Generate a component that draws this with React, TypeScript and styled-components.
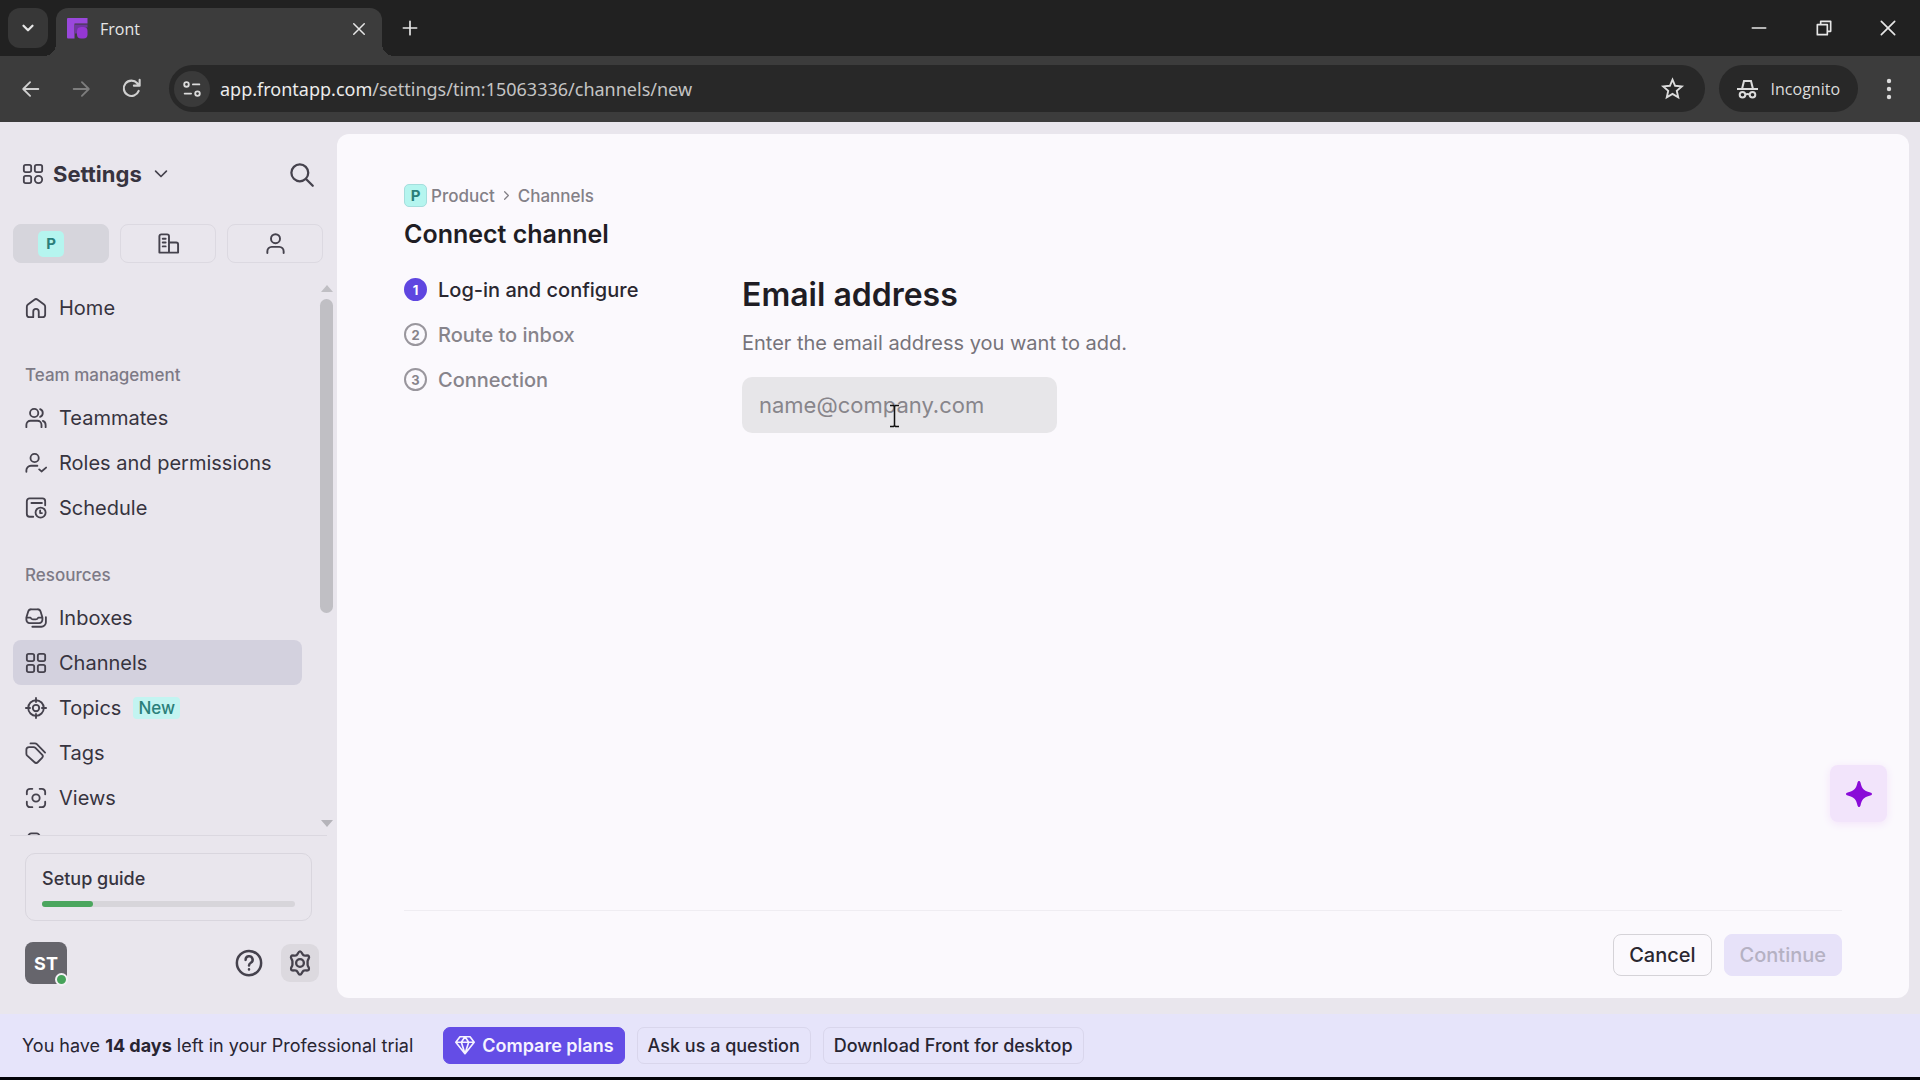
import React from "react";
import styled, { createGlobalStyle } from "styled-components";

const GlobalStyle = createGlobalStyle`
  *, *::before, *::after { box-sizing: border-box; }
  body { margin: 0; background: #000; font-family: Inter, "Liberation Sans", sans-serif; }
  button, input { font: inherit; color: inherit; margin: 0; }
  h1, h2, p, ol, ul { margin: 0; padding: 0; }
  ol, ul { list-style: none; }
`;

const Page = styled.div`
  height: 100vh;
  display: flex;
  flex-direction: column;
  border-bottom: 3px solid #030308;
  overflow: hidden;
`;

/* Browser frame */
const TabStrip = styled.header`
  flex: none;
  height: 56px;
  padding: 8px 8px 0;
  display: flex;
  background: #212121;
  color: #e6e6e6;
  font-family: "Open Sans", "Noto Sans", sans-serif;
`;
const PlainButton = styled.button`
  border: 0;
  padding: 0;
  background: none;
  display: flex;
  align-items: center;
  justify-content: center;
`;
const TabSearch = styled(PlainButton)`
  width: 40px;
  height: 40px;
  border-radius: 12px;
  background: #373737;
`;
const Tab = styled.div`
  position: relative;
  width: 326px;
  margin-left: 8px;
  padding: 0 14px 7px 11px;
  display: flex;
  align-items: center;
  gap: 12px;
  border-radius: 12px 12px 0 0;
  background: #3c3c3c;
  font-size: 16px;
  &::before, &::after {
    content: "";
    position: absolute;
    bottom: 0;
    width: 12px;
    height: 12px;
  }
  &::before { left: -12px; background: radial-gradient(circle at 0 0, transparent 12px, #3c3c3c 12px); }
  &::after { right: -12px; background: radial-gradient(circle at 100% 0, transparent 12px, #3c3c3c 12px); }
`;
const TabTitle = styled.span` flex: 1; `;
const NewTab = styled(PlainButton)`
  width: 40px;
  height: 40px;
  margin-left: 8px;
`;
const WindowControls = styled.div`
  margin-left: auto;
  height: 40px;
  display: flex;
`;
const WindowButton = styled(PlainButton)` width: 65px; &:last-child { width: 48px; margin-left: 8px; } `;

const Toolbar = styled.div`
  flex: none;
  height: 66px;
  padding: 9px 16px 10px 6px;
  display: flex;
  align-items: center;
  background: #3c3c3c;
  color: #dcdcdc;
  font-family: "Open Sans", "Noto Sans", sans-serif;
`;
const ToolButton = styled(PlainButton)<{ $dim?: boolean }>`
  width: 50px;
  height: 40px;
  color: ${(p) => (p.$dim ? "#7d7d7d" : "#d0d0d0")};
`;
const AddressBar = styled.div`
  flex: 1;
  height: 47px;
  margin: 0 14px 0 13px;
  padding: 0 20px 0 5px;
  display: flex;
  align-items: center;
  gap: 10px;
  border-radius: 24px;
  background: #282828;
`;
const SiteInfo = styled(PlainButton)`
  width: 36px;
  height: 36px;
  border-radius: 50%;
  background: #3a3a3a;
`;
const Url = styled.span`
  flex: 1;
  font-family: "Noto Sans", "Open Sans", sans-serif;
  font-size: 18px;
  color: #c4c4c4;
`;
const UrlHost = styled.span` color: #ececec; `;
const Incognito = styled(PlainButton)`
  height: 47px;
  padding: 0 18px;
  gap: 13px;
  border-radius: 24px;
  background: #282828;
  font-size: 16px;
`;
const MenuButton = styled(PlainButton)` width: 30px; height: 40px; margin-left: 16px; `;

/* Application */
const AppArea = styled.div`
  flex: 1;
  min-height: 0;
  display: flex;
  padding: 12px 11px 16px 0;
  background: #e9e6ed;
`;
const Sidebar = styled.aside`
  width: 337px;
  flex: none;
  display: flex;
  flex-direction: column;
  color: #37343f;
  svg { color: #45424d; }
`;
const SideHeader = styled.div`
  height: 90px;
  flex: none;
  padding: 0 22px 10px;
  display: flex;
  align-items: center;
  justify-content: space-between;
`;
const SettingsButton = styled(PlainButton)`
  gap: 9px;
  font-size: 22px;
  font-weight: 700;
`;
const Segments = styled.div`
  display: grid;
  grid-template-columns: repeat(3, 1fr);
  gap: 11px;
  padding: 0 14px 0 13px;
  margin-bottom: 22px;
`;
const Segment = styled(PlainButton)<{ $active?: boolean }>`
  height: 39px;
  border-radius: 8px;
  border: 1px solid ${(p) => (p.$active ? "#d6d5dc" : "#dcd9e1")};
  background: ${(p) => (p.$active ? "#d6d5dc" : "transparent")};
  padding-right: ${(p) => (p.$active ? "20px" : "0")};
`;
const ProductBadge = styled.span<{ $large?: boolean }>`
  width: ${(p) => (p.$large ? 26 : 23)}px;
  height: ${(p) => (p.$large ? 26 : 23)}px;
  border-radius: 5px;
  border: ${(p) => (p.$large ? "0" : "1px solid #a5dedd")};
  display: flex;
  align-items: center;
  justify-content: center;
  background: #b5f5ef;
  color: #2b7f7a;
  font-size: 15px;
  font-weight: 700;
`;
const NavArea = styled.div`
  flex: 1;
  min-height: 0;
  display: flex;
  overflow: hidden;
`;
const NavScroll = styled.nav`
  flex: 1;
  overflow: hidden;
  padding: 0 18px 0 13px;
`;
const GroupLabel = styled.h2`
  padding: 33px 12px 8px;
  line-height: 24px;
  font-size: 17px;
  font-weight: 500;
  color: #7d7a86;
`;
const NavLink = styled.a<{ $active?: boolean }>`
  height: 45px;
  padding: 0 12px;
  display: flex;
  align-items: center;
  gap: 12px;
  border-radius: 8px;
  background: ${(p) => (p.$active ? "#d3d1de" : "transparent")};
  color: #37343f;
  font-size: 20px;
  text-decoration: none;
`;
const NewTag = styled.span`
  padding: 0 5px;
  line-height: 22px;
  border-radius: 4px;
  background: #c3f4f1;
  color: #2b7f7a;
  font-size: 17px;
  font-weight: 500;
`;
const ScrollTrack = styled.div`
  width: 13px;
  margin: 0 4px 8px 0;
  display: flex;
  flex-direction: column;
  align-items: center;
  gap: 7px;
`;
const ScrollArrow = styled.span<{ $down?: boolean }>`
  border: 6px solid transparent;
  border-bottom: ${(p) => (p.$down ? "0" : "7px solid #c0bfc4")};
  border-top: ${(p) => (p.$down ? "7px solid #b5b4ba" : "0")};
  margin-top: ${(p) => (p.$down ? "auto" : "0")};
`;
const ScrollThumb = styled.span`
  width: 13px;
  height: 58%;
  border-radius: 7px;
  background: #c0bfc4;
`;
const SideFooter = styled.div`
  flex: none;
  margin: 0 10px;
  padding: 17px 8px 14px 15px;
  border-top: 1px solid #dbd8e0;
`;
const SetupCard = styled.button`
  display: block;
  width: calc(100% - 7px);
  height: 68px;
  padding: 0 16px;
  border: 1px solid #d9d6de;
  border-radius: 10px;
  background: transparent;
  text-align: left;
  line-height: 24px;
  font-size: 18px;
  font-weight: 500;
`;
const Track = styled.span`
  display: block;
  height: 6px;
  margin-top: 10px;
  border-radius: 3px;
  background: #d7d5da;
`;
const Fill = styled.span`
  display: block;
  height: 6px;
  border-radius: 3px;
  background: #4ba65e;
`;
const Account = styled.div`
  display: flex;
  align-items: center;
  margin-top: 21px;
`;
const Avatar = styled(PlainButton)`
  position: relative;
  width: 42px;
  height: 42px;
  margin-right: auto;
  border-radius: 8px;
  background: #66656c;
  color: #fff;
  font-size: 18px;
  font-weight: 700;
`;
const Presence = styled.span`
  position: absolute;
  right: -1px;
  bottom: -2px;
  width: 13px;
  height: 13px;
  border-radius: 50%;
  border: 2px solid #f3f1f5;
  background: #47a35b;
`;
const RoundButton = styled(PlainButton)<{ $active?: boolean }>`
  width: 38px;
  height: 38px;
  margin-left: 13px;
  border-radius: 9px;
  background: ${(p) => (p.$active ? "#dcd9df" : "transparent")};
`;

/* Main card */
const Card = styled.main`
  flex: 1;
  min-width: 0;
  padding: 50px 67px 22px;
  display: flex;
  flex-direction: column;
  border-radius: 12px;
  background: #fbf9fd;
  color: #1f1d24;
`;
const Breadcrumb = styled.nav`
  height: 23px;
  display: flex;
  align-items: center;
  gap: 4px;
  font-size: 17px;
  font-weight: 500;
  color: #838087;
  a { color: inherit; text-decoration: none; }
`;
const Title = styled.h1`
  margin-top: 11px;
  line-height: 32px;
  font-size: 25px;
  font-weight: 600;
`;
const Wizard = styled.div`
  flex: 1;
  display: flex;
  margin-top: 17px;
`;
const Steps = styled.ol` width: 338px; flex: none; `;
const Step = styled.li<{ $active?: boolean }>`
  height: 45px;
  display: flex;
  align-items: center;
  gap: 11px;
  font-size: 20px;
  font-weight: 500;
  color: ${(p) => (p.$active ? "#2a2730" : "#87848b")};
`;
const StepNumber = styled.span<{ $active?: boolean }>`
  width: 23px;
  height: 23px;
  border-radius: 50%;
  display: flex;
  align-items: center;
  justify-content: center;
  border: 2px solid ${(p) => (p.$active ? "#5f46e0" : "#99969d")};
  background: ${(p) => (p.$active ? "#5f46e0" : "transparent")};
  color: ${(p) => (p.$active ? "#fff" : "#87848b")};
  font-size: 13px;
  font-weight: 700;
`;
const Form = styled.form`
  flex: 1;
  display: flex;
  flex-direction: column;
  align-items: flex-start;
  padding-top: 8px;
`;
const FieldLabel = styled.label`
  line-height: 40px;
  font-size: 32px;
  font-weight: 600;
`;
const Hint = styled.p`
  margin-top: 16px;
  line-height: 24px;
  font-size: 20px;
  color: #76737a;
`;
const Field = styled.div` position: relative; margin-top: 22px; `;
const EmailInput = styled.input`
  display: block;
  width: 315px;
  height: 56px;
  padding: 0 17px;
  border: 0;
  border-radius: 10px;
  outline: 0;
  background: #e7e6e9;
  font-size: 22px;
  &::placeholder { color: #87858b; opacity: 1; }
`;
const Caret = styled.svg`
  position: absolute;
  left: 147px;
  top: 27px;
`;
const Actions = styled.footer`
  display: flex;
  justify-content: flex-end;
  gap: 12px;
  padding-top: 23px;
  border-top: 1px solid #efedf2;
`;
const ActionButton = styled.button<{ $primary?: boolean }>`
  height: 42px;
  padding: 0 15px;
  border-radius: 8px;
  border: 1px solid ${(p) => (p.$primary ? "#e7e2f9" : "#d5d3d8")};
  background: ${(p) => (p.$primary ? "#e7e2f9" : "transparent")};
  color: ${(p) => (p.$primary ? "#b5b1c3" : "#2a2730")};
  font-size: 20px;
  font-weight: 500;
`;
const Assistant = styled(PlainButton)`
  position: fixed;
  right: 33px;
  bottom: 258px;
  width: 57px;
  height: 57px;
  border-radius: 8px;
  background: #f2e4fb;
  box-shadow: 0 2px 8px #f3e3fa;
`;

const Banner = styled.section`
  flex: none;
  height: 63px;
  padding: 0 22px 1px;
  display: flex;
  align-items: center;
  gap: 12px;
  background: #e6e4fa;
  color: #282532;
  font-size: 18px;
`;
const TrialText = styled.p` margin-right: 18px; b { font-weight: 700; } `;
const BannerButton = styled.button<{ $primary?: boolean }>`
  height: 37px;
  padding: 0 10px;
  display: flex;
  align-items: center;
  gap: 6px;
  border-radius: 7px;
  border: 1px solid ${(p) => (p.$primary ? "#644de6" : "#d9d6ec")};
  background: ${(p) => (p.$primary ? "#644de6" : "transparent")};
  color: ${(p) => (p.$primary ? "#f5f2ff" : "#282532")};
  font-size: 18px;
  font-weight: ${(p) => (p.$primary ? 600 : 500)};
`;

type IconProps = { size?: number; weight?: number; children: React.ReactNode };
const Icon = ({ size = 24, weight = 2, children }: IconProps) => (
  <svg width={size} height={size} viewBox="0 0 24 24" fill="none" stroke="currentColor" strokeWidth={weight} strokeLinecap="round" strokeLinejoin="round" aria-hidden="true">
    {children}
  </svg>
);

const gridIcon = (
  <>
    <rect x="2" y="2" width="8" height="8" rx="2" />
    <rect x="14" y="2" width="8" height="8" rx="2" />
    <rect x="2" y="14" width="8" height="8" rx="2" />
    <rect x="14" y="14" width="8" height="8" rx="2" />
  </>
);
const settingsGrid = (
  <>
    <rect x="2" y="2" width="8" height="8" rx="2" />
    <rect x="14" y="2" width="8" height="8" rx="2" />
    <rect x="2" y="14" width="8" height="8" rx="2" />
    <circle cx="18" cy="18" r="4" />
  </>
);
const icons = {
  home: <path d="M9 22H5a3 3 0 0 1-3-3v-8.500a3 3 0 0 1 1.200-2.400l7-5.200a3 3 0 0 1 3.600 0l7 5.200a3 3 0 0 1 1.200 2.400V19a3 3 0 0 1-3 3h-4v-6a3 3 0 0 0-6 0z" />,
  teammates: (
    <>
      <circle cx="10" cy="6.500" r="4.500" />
      <path d="M1.500 22v-2.500A4.500 4.500 0 0 1 6 15h7.500a4.500 4.500 0 0 1 4.500 4.500V22" />
      <path d="M16.500 2.300a4.500 4.500 0 0 1 0 8.400M19.500 15.200c2 .8 3 2.300 3 4.300V22" />
    </>
  ),
  roles: (
    <>
      <circle cx="10.500" cy="6.500" r="4.500" />
      <path d="M1.500 21.500V20a5 5 0 0 1 5-5h7M15.500 19l2.500 2.200 5-4.200" />
    </>
  ),
  schedule: (
    <>
      <path d="M9 21.500H5a3 3 0 0 1-3-3v-14a3 3 0 0 1 3-3h14a3 3 0 0 1 3 3V9M7 6.500h11.500" />
      <circle cx="17" cy="17" r="5.500" />
      <path d="M16.500 14.500v3h2" />
    </>
  ),
  inboxes: (
    <>
      <path d="M1.500 11.500 3.500 5A3.500 3.500 0 0 1 6.900 2.500h6.700A3.500 3.500 0 0 1 17 5l2 6.500v2.500a3.500 3.500 0 0 1-3.500 3.500H5a3.500 3.500 0 0 1-3.500-3.500zM1.500 11.500h4.500c.5 1.300 1.300 2 2.500 2h3.500c1.200 0 2-.7 2.500-2H19" />
      <path d="M22.800 11v5.500a5 5 0 0 1-5 5H8" />
    </>
  ),
  channels: gridIcon,
  topics: (
    <>
      <circle cx="12" cy="12" r="8.500" />
      <circle cx="12" cy="12" r="3.500" />
      <path d="M12 1v4.500M12 18.500V23M1 12h4.500M18.500 12H23" />
    </>
  ),
  tags: (
    <>
      <path d="M1.500 8.500a3 3 0 0 1 3-3h4.800a3 3 0 0 1 2.100.9l7.200 7.300a2.500 2.500 0 0 1 0 3.500l-4.700 4.900a2.500 2.500 0 0 1-3.500 0L2.400 14.900a3 3 0 0 1-.9-2.100z" />
      <path d="M6 1.500h4.800a3 3 0 0 1 2.100.9l9 9.100" />
    </>
  ),
  views: (
    <>
      <circle cx="12" cy="12" r="4" />
      <path d="M2 8V5.500A3.500 3.500 0 0 1 5.500 2H8M16 2h2.500A3.500 3.500 0 0 1 22 5.500V8M22 16v2.500a3.500 3.500 0 0 1-3.500 3.500H16M8 22H5.500A3.500 3.500 0 0 1 2 18.500V16" />
    </>
  ),
  rules: <path d="M3.500 22V5A3.500 3.500 0 0 1 7 1.500h5.500A3.500 3.500 0 0 1 16 5v17" />,
};

type Item = { label: string; icon: keyof typeof icons; tag?: string; active?: boolean };
const team: Item[] = [
  { label: "Teammates", icon: "teammates" },
  { label: "Roles and permissions", icon: "roles" },
  { label: "Schedule", icon: "schedule" },
];
const resources: Item[] = [
  { label: "Inboxes", icon: "inboxes" },
  { label: "Channels", icon: "channels", active: true },
  { label: "Topics", icon: "topics", tag: "New" },
  { label: "Tags", icon: "tags" },
  { label: "Views", icon: "views" },
];
const steps = ["Log-in and configure", "Route to inbox", "Connection"];

const NavItem = ({ label, icon, tag, active }: Item) => (
  <NavLink href="#" $active={active} aria-current={active ? "page" : undefined}>
    <Icon size={22}>{icons[icon]}</Icon>
    {label}
    {tag && <NewTag>{tag}</NewTag>}
  </NavLink>
);

export default function App() {
  const progress = 20;
  return (
    <Page>
      <GlobalStyle />
      <TabStrip>
        <TabSearch aria-label="Search tabs"><Icon size={18} weight={3}><path d="m6 9 6 6 6-6" /></Icon></TabSearch>
        <Tab>
          <svg width="21" height="21" viewBox="0 0 21 21" aria-hidden="true">
            <path d="M1 0h19.500v5.500H7.500v15H1a1 1 0 0 1-1-1V1a1 1 0 0 1 1-1z" fill="#9a48dc" />
            <path d="M8 6.500h12.500v3H12l-1.500 2v4H8z" fill="#6f35a0" />
            <rect x="10" y="9" width="10.500" height="11.500" rx="4" fill="#9437d2" />
          </svg>
          <TabTitle>Front</TabTitle>
          <PlainButton aria-label="Close tab"><Icon size={18}><path d="m5 5 14 14M19 5 5 19" /></Icon></PlainButton>
        </Tab>
        <NewTab aria-label="New tab"><Icon size={20}><path d="M12 4v16M4 12h16" /></Icon></NewTab>
        <WindowControls>
          <WindowButton aria-label="Minimize"><Icon size={20} weight={2}><path d="M4 12h16" /></Icon></WindowButton>
          <WindowButton aria-label="Restore"><Icon size={20} weight={2}><path d="M4 8h12v12H4zM8 8V4h12v12h-4" /></Icon></WindowButton>
          <WindowButton aria-label="Close"><Icon size={20} weight={2}><path d="m4 4 16 16M20 4 4 20" /></Icon></WindowButton>
        </WindowControls>
      </TabStrip>
      <Toolbar>
        <ToolButton aria-label="Back"><Icon size={22}><path d="M20 12H4M11 4.500 3.500 12l7.500 7.500" /></Icon></ToolButton>
        <ToolButton aria-label="Forward" $dim><Icon size={22}><path d="M4 12h16M13 4.500l7.500 7.500-7.500 7.500" /></Icon></ToolButton>
        <ToolButton aria-label="Reload"><Icon size={23} weight={2.200}><path d="M19.500 14.500a8 8 0 1 1-1.500-8l2 2.500M20.500 3v6h-6" /></Icon></ToolButton>
        <AddressBar>
          <SiteInfo aria-label="Site information">
            <Icon size={22}><circle cx="6" cy="7" r="2.500" /><path d="M13 7h7M4 17h7" /><circle cx="18" cy="17" r="2.500" /></Icon>
          </SiteInfo>
          <Url><UrlHost>app.frontapp.com</UrlHost>/settings/tim:15063336/channels/new</Url>
          <PlainButton aria-label="Bookmark this page">
            <Icon size={25} weight={1.800}><path strokeLinejoin="miter" d="m12 3.500 2.500 5.900 6.400.6-4.800 4.200 1.400 6.300L12 17.200l-5.500 3.300 1.400-6.300L3.100 10l6.400-.6z" /></Icon>
          </PlainButton>
        </AddressBar>
        <Incognito>
          <svg width="21" height="20" viewBox="0 0 21 20" fill="none" stroke="currentColor" strokeWidth="2" aria-hidden="true">
            <path d="M0 10h21M5 10 7 2h7l2 8" />
            <circle cx="5.500" cy="15.800" r="2.800" /><circle cx="15.500" cy="15.800" r="2.800" /><path d="M8 15.500q2.500-1 5 0" />
          </svg>
          Incognito
        </Incognito>
        <MenuButton aria-label="Browser menu">
          <svg width="6" height="22" viewBox="0 0 6 22" fill="currentColor" aria-hidden="true"><circle cx="3" cy="3" r="2.200" /><circle cx="3" cy="11" r="2.200" /><circle cx="3" cy="19" r="2.200" /></svg>
        </MenuButton>
      </Toolbar>

      <AppArea>
        <Sidebar>
          <SideHeader>
            <SettingsButton>
              <Icon size={22}>{settingsGrid}</Icon>
              Settings
              <Icon size={20}><path d="m5.500 8.500 6.500 6.500 6.500-6.500" /></Icon>
            </SettingsButton>
            <PlainButton aria-label="Search"><Icon size={27}><circle cx="10.500" cy="10.500" r="7.500" /><path d="m16 16 6 6" /></Icon></PlainButton>
          </SideHeader>
          <Segments>
            <Segment $active aria-label="Product workspace"><ProductBadge $large>P</ProductBadge></Segment>
            <Segment aria-label="Company">
              <Icon size={23}><path d="M2.500 21.500v-17a2 2 0 0 1 2-2h6a2 2 0 0 1 2 2v17zM12.500 11H20a2 2 0 0 1 2 2v8.500h-9.500M6 7H9M6 11H9M6 15H9" /></Icon>
            </Segment>
            <Segment aria-label="Personal">
              <Icon size={23}><circle cx="12" cy="7" r="4.700" /><path d="M3.500 22v-2a4.500 4.500 0 0 1 4.500-4.500h8a4.500 4.500 0 0 1 4.500 4.500v2" /></Icon>
            </Segment>
          </Segments>
          <NavArea>
            <NavScroll aria-label="Settings">
              <NavItem label="Home" icon="home" />
              <GroupLabel>Team management</GroupLabel>
              {team.map((i) => <NavItem key={i.label} {...i} />)}
              <GroupLabel>Resources</GroupLabel>
              {resources.map((i) => <NavItem key={i.label} {...i} />)}
              <NavItem label="" icon="rules" />
            </NavScroll>
            <ScrollTrack aria-hidden="true"><ScrollArrow /><ScrollThumb /><ScrollArrow $down /></ScrollTrack>
          </NavArea>
          <SideFooter>
            <SetupCard>
              Setup guide
              <Track><Fill style={{ width: `${progress}%` }} /></Track>
            </SetupCard>
            <Account>
              <Avatar>ST<Presence /></Avatar>
              <RoundButton aria-label="Help">
                <Icon size={30}><circle cx="12" cy="12" r="9.700" /><path d="M9.300 9.500a2.800 2.800 0 1 1 4.200 2.300c-1 .6-1.500 1.100-1.500 2.200M12 17v.1" /></Icon>
              </RoundButton>
              <RoundButton $active aria-label="Settings">
                <Icon size={28}>
                  <path d="M12 2c1.600 0 1.600 2.500 3 3.400s3.700-.7 4.600.8c.9 1.600-1.100 2.600-1.100 4.300v3c0 1.700 2 2.700 1.100 4.300-.9 1.500-3.200-.1-4.600.8S13.600 22 12 22s-1.600-2.500-3-3.400-3.700.7-4.600-.8c-.9-1.600 1.100-2.600 1.100-4.300v-3c0-1.700-2-2.700-1.100-4.300.9-1.500 3.200.1 4.600-.8S10.400 2 12 2z" />
                  <circle cx="12" cy="12" r="3.300" />
                </Icon>
              </RoundButton>
            </Account>
          </SideFooter>
        </Sidebar>

        <Card>
          <Breadcrumb aria-label="Breadcrumb">
            <ProductBadge>P</ProductBadge>
            <a href="#">Product</a>
            <Icon size={15}><path d="m9 6 6 6-6 6" /></Icon>
            <a href="#">Channels</a>
          </Breadcrumb>
          <Title>Connect channel</Title>
          <Wizard>
            <Steps>
              {steps.map((label, i) => (
                <Step key={label} $active={i === 0}><StepNumber $active={i === 0}>{i + 1}</StepNumber>{label}</Step>
              ))}
            </Steps>
            <Form onSubmit={(e) => e.preventDefault()}>
              <FieldLabel htmlFor="email">Email address</FieldLabel>
              <Hint>Enter the email address you want to add.</Hint>
              <Field>
                <EmailInput id="email" type="email" placeholder="name@company.com" />
                <Caret width="11" height="24" viewBox="0 0 11 24" fill="none" stroke="#111" strokeWidth="1.500" aria-hidden="true">
                  <path d="M1 1.500h3.500l1 1 1-1H10M5.500 2.500v19M1 22.500h3.500l1-1 1 1H10" />
                </Caret>
              </Field>
            </Form>
          </Wizard>
          <Actions>
            <ActionButton>Cancel</ActionButton>
            <ActionButton $primary disabled>Continue</ActionButton>
          </Actions>
        </Card>
      </AppArea>

      <Banner>
        <TrialText>You have <b>14 days</b> left in your Professional trial</TrialText>
        <BannerButton $primary>
          <Icon size={22} weight={1.800}><path d="M6.500 3h11L22 9 12 21.500 2 9zM2 9h20M12 3 8 9l4 12.500L16 9z" /></Icon>
          Compare plans
        </BannerButton>
        <BannerButton>Ask us a question</BannerButton>
        <BannerButton>Download Front for desktop</BannerButton>
      </Banner>
      <Assistant aria-label="Assistant">
        <svg width="26" height="26" viewBox="0 0 26 26" fill="#8a0bd8" aria-hidden="true">
          <path d="M13 0c.8 0 1.200.6 1.500 1.500 1.300 5.500 2.800 8.300 9.800 10 .9.300 1.700.7 1.700 1.500s-.8 1.200-1.700 1.500c-7 1.700-8.500 4.500-9.800 10-.3.900-.7 1.500-1.500 1.500s-1.200-.6-1.500-1.500c-1.300-5.500-2.800-8.300-9.800-10C.8 14.200 0 13.800 0 13s.8-1.200 1.700-1.500c7-1.700 8.500-4.500 9.800-10C11.800.6 12.200 0 13 0z" />
        </svg>
      </Assistant>
    </Page>
  );
}
